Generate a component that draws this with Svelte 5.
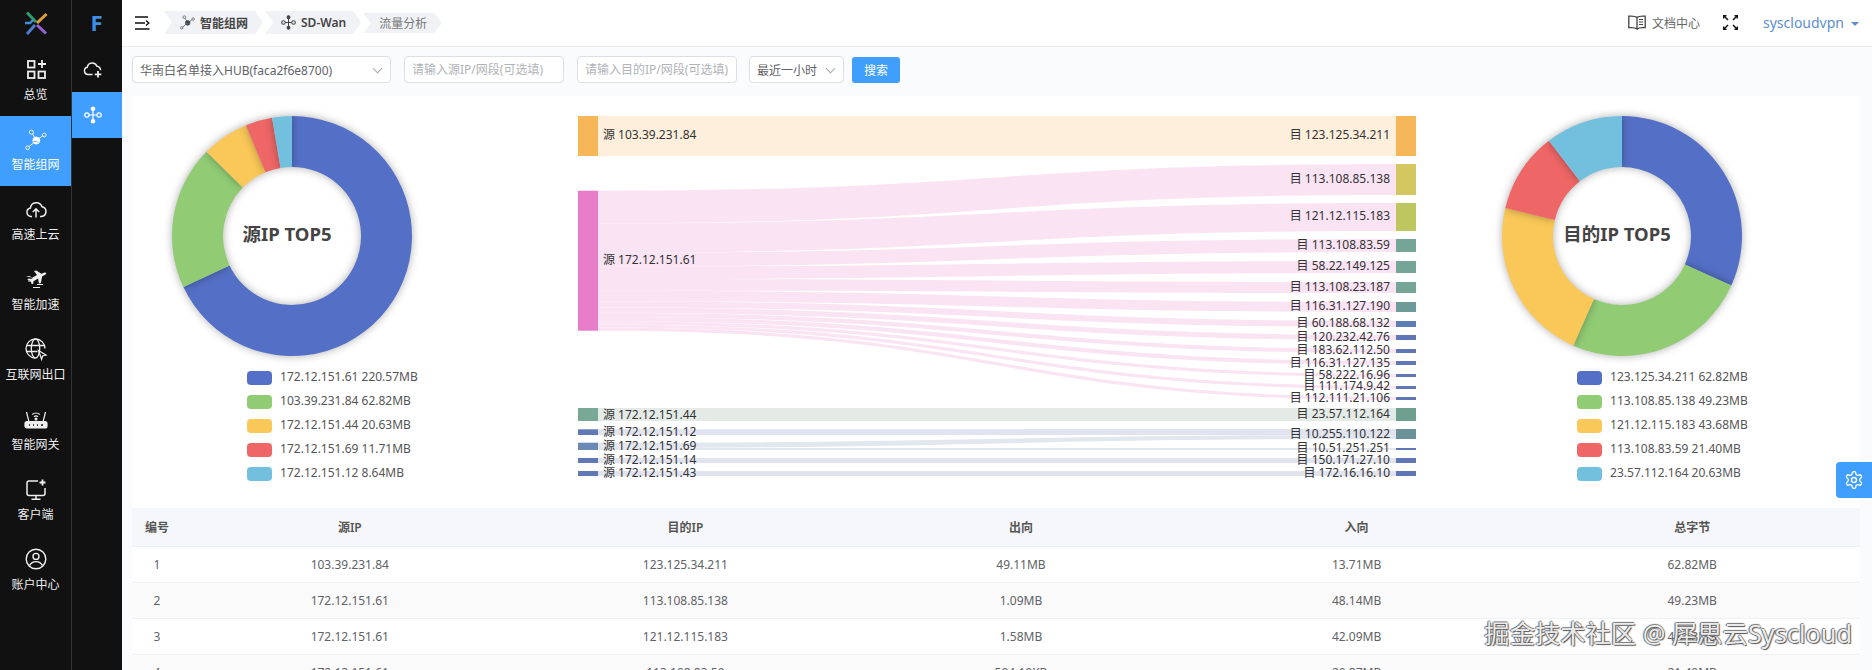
<script>
	const sourceData = [
		{ name: '172.12.151.61', size: '220.57MB', value: 220.57 },
		{ name: '103.39.231.84', size: '62.82MB', value: 62.82 },
		{ name: '172.12.151.44', size: '20.63MB', value: 20.63 },
		{ name: '172.12.151.69', size: '11.71MB', value: 11.71 },
		{ name: '172.12.151.12', size: '8.64MB', value: 8.64 }
	];
	const targetData = [
		{ name: '123.125.34.211', size: '62.82MB', value: 62.82 },
		{ name: '113.108.85.138', size: '49.23MB', value: 49.23 },
		{ name: '121.12.115.183', size: '43.68MB', value: 43.68 },
		{ name: '113.108.83.59', size: '21.40MB', value: 21.4 },
		{ name: '23.57.112.164', size: '20.63MB', value: 20.63 }
	];
	const palette = ['#5470c6', '#91cc75', '#fac858', '#ee6666', '#73c0de'];

	function sector(r0, r1, a0, a1) {
		const cx = 160;
		const cy = 140;
		const p = (r, a) => `${(cx + r * Math.sin(a)).toFixed(2)} ${(cy - r * Math.cos(a)).toFixed(2)}`;
		const large = a1 - a0 > Math.PI ? 1 : 0;
		return `M${p(r1, a0)}A${r1} ${r1} 0 ${large} 1 ${p(r1, a1)}L${p(r0, a1)}A${r0} ${r0} 0 ${large} 0 ${p(r0, a0)}Z`;
	}

	function sectors(data) {
		const total = data.reduce((s, d) => s + d.value, 0);
		let angle = 0;
		return data.map((d, i) => {
			const next = angle + (d.value / total) * Math.PI * 2;
			const path = sector(69, 120, angle, next);
			angle = next;
			return { path, color: palette[i] };
		});
	}

	const leftNodes = [
		{ label: '103.39.231.84', y0: 116, y1: 156, cy: 134, color: '#f5b65a' },
		{ label: '172.12.151.61', y0: 190.7, y1: 330.7, cy: 259, color: '#e87dca' },
		{ label: '172.12.151.44', y0: 408, y1: 421, cy: 414, color: '#7aa896' },
		{ label: '172.12.151.12', y0: 429.3, y1: 435, cy: 431, color: '#6079b4' },
		{ label: '172.12.151.69', y0: 442.7, y1: 450, cy: 445.5, color: '#6a8ab5' },
		{ label: '172.12.151.14', y0: 458, y1: 463, cy: 459.5, color: '#6079b4' },
		{ label: '172.12.151.43', y0: 471, y1: 476, cy: 472.5, color: '#6079b4' }
	];
	const rightNodes = [
		{ label: '123.125.34.211', y0: 116, y1: 156, cy: 134.5, color: '#f5b65a' },
		{ label: '113.108.85.138', y0: 164, y1: 195, cy: 178.5, color: '#d4c661' },
		{ label: '121.12.115.183', y0: 203, y1: 231, cy: 215.5, color: '#bdc65f' },
		{ label: '113.108.83.59', y0: 239, y1: 252, cy: 244.5, color: '#75a596' },
		{ label: '58.22.149.125', y0: 261, y1: 273, cy: 265.5, color: '#75a596' },
		{ label: '113.108.23.187', y0: 282, y1: 293, cy: 286.5, color: '#75a596' },
		{ label: '116.31.127.190', y0: 302, y1: 312, cy: 305.5, color: '#6f9a9a' },
		{ label: '60.188.68.132', y0: 321, y1: 327, cy: 322.5, color: '#5f7db5' },
		{ label: '120.232.42.76', y0: 335, y1: 340, cy: 336, color: '#5f78b5' },
		{ label: '183.62.112.50', y0: 349, y1: 353, cy: 349.5, color: '#5f78b5' },
		{ label: '116.31.127.135', y0: 361, y1: 365, cy: 362.5, color: '#5f78b5' },
		{ label: '58.222.16.96', y0: 374, y1: 377, cy: 374, color: '#5f78b5' },
		{ label: '111.174.9.42', y0: 386, y1: 389, cy: 385.5, color: '#5f78b5' },
		{ label: '112.111.21.106', y0: 397, y1: 400, cy: 397.5, color: '#5f78b5' },
		{ label: '23.57.112.164', y0: 408, y1: 421, cy: 413.5, color: '#6f9f8f' },
		{ label: '10.255.110.122', y0: 429, y1: 439, cy: 433.5, color: '#6b9199' },
		{ label: '10.51.251.251', y0: 448, y1: 450, cy: 447.5, color: '#5f78b5' },
		{ label: '150.171.27.10', y0: 458, y1: 463, cy: 459.5, color: '#5f78b5' },
		{ label: '172.16.16.10', y0: 471, y1: 476, cy: 472.5, color: '#5f78b5' }
	];

	function band(l0, l1, r0, r1) {
		const x0 = 598;
		const x1 = 1396;
		const m = (x0 + x1) / 2;
		return `M${x0} ${l0}C${m} ${l0} ${m} ${r0} ${x1} ${r0}L${x1} ${r1}C${m} ${r1} ${m} ${l1} ${x0} ${l1}Z`;
	}

	// the big source node fans out to targets 1..13
	const pinkTargets = rightNodes.slice(1, 14);
	const pinkTotal = pinkTargets.reduce((s, n) => s + (n.y1 - n.y0), 0);
	let pinkY = 190.7;
	const links = [{ d: band(116, 156, 116, 156), color: '#feefdd' }];
	for (const n of pinkTargets) {
		const h = ((n.y1 - n.y0) / pinkTotal) * 140;
		links.push({ d: band(pinkY, pinkY + h, n.y0, n.y1), color: '#fae4f3' });
		pinkY += h;
	}
	links.push({ d: band(408, 421, 408, 421), color: '#e4ebe7' });
	links.push({ d: band(429.3, 435, 429, 435), color: '#e1e4ee' });
	links.push({ d: band(442.7, 448, 435, 439), color: '#e2e7ef' });
	links.push({ d: band(448, 450, 448, 450), color: '#e2e7ef' });
	links.push({ d: band(458, 463, 458, 463), color: '#e1e4ee' });
	links.push({ d: band(471, 476, 471, 476), color: '#e1e4ee' });

	const rows = [
		['1', '103.39.231.84', '123.125.34.211', '49.11MB', '13.71MB', '62.82MB'],
		['2', '172.12.151.61', '113.108.85.138', '1.09MB', '48.14MB', '49.23MB'],
		['3', '172.12.151.61', '121.12.115.183', '1.58MB', '42.09MB', '43.68MB'],
		['4', '172.12.151.61', '113.108.83.59', '594.19KB', '20.87MB', '21.40MB']
	];
</script>

{#snippet donut(data, title, titleX)}
	<div class="chart">
		<svg class="donut" width="320" height="268" viewBox="0 0 320 268">
			{#each sectors(data) as s}
				<path class="sector" d={s.path} fill={s.color} />
			{/each}
			<text class="donut-title" x={titleX} y="137">{title}</text>
		</svg>
		<ul class="legend">
			{#each data as d, i}
				<li>
					<span class="swatch" style="background: {palette[i]}"></span>
					{d.name} {d.size}
				</li>
			{/each}
		</ul>
	</div>
{/snippet}

{#snippet networkIcon(size)}
	<svg width={size} height={size} viewBox="0 0 16 16" fill="none" stroke="currentColor" stroke-width="1.1">
		<circle cx="2.600" cy="8" r="1.900" />
		<circle cx="13.400" cy="8" r="1.900" />
		<path d="M4.500 8h7M8 3v10" />
		<circle cx="8" cy="2.400" r="1.500" fill="currentColor" />
		<circle cx="8" cy="13.600" r="1.500" fill="currentColor" />
	</svg>
{/snippet}

{#snippet meshIcon(size)}
	<svg width={size} height={size} viewBox="0 0 24 24" fill="none" stroke="currentColor" stroke-width="1">
		<circle cx="7" cy="3.500" r="2.200" />
		<circle cx="21" cy="6.500" r="2" />
		<circle cx="2.800" cy="20.500" r="2" />
		<path d="M8.300 5.400 11 10M19.300 7.600 15 10.500M4.400 19.200 9.500 15" />
		<circle cx="12.300" cy="12.600" r="3.800" fill="currentColor" />
		<path d="M9 13.500c2-.2 4 .3 6 1" stroke="#409eff" stroke-width=".8" />
	</svg>
{/snippet}

<div class="app">
	<aside class="rail">
		<div class="logo">
			<svg width="24" height="24" viewBox="0 0 24 24" fill="none" stroke-width="3">
				<path d="M3 1.500 12 11" stroke="#2f9e68" />
				<path d="M22.500 3 13 12" stroke="#e0a13c" />
				<path d="M1 12h5l3-3" stroke="#3f8fd8" stroke-width="2.400" />
				<path d="M3 23l8-9" stroke="#4a7fd0" />
				<path d="M13 14l9 8.500" stroke="#9a5fd6" />
			</svg>
		</div>
		<a class="nav-item">
			<svg width="24" height="24" viewBox="0 0 24 24" fill="none" stroke="currentColor" stroke-width="1.800">
				<rect x="4" y="4" width="6.500" height="6.500" />
				<rect x="4" y="14.500" width="6.500" height="6.500" />
				<rect x="14.500" y="14.500" width="6.500" height="6.500" />
				<path d="M18 3v8M14 7h8" />
			</svg>
			<span>总览</span>
		</a>
		<a class="nav-item active">
			{@render meshIcon(22)}
			<span>智能组网</span>
		</a>
		<a class="nav-item">
			<svg width="24" height="24" viewBox="0 0 24 24" fill="none" stroke="currentColor" stroke-width="1.500">
				<path d="M8 19.500H7a4.300 4.300 0 0 1-.6-8.500A6 6 0 0 1 18 9.800a4.900 4.900 0 0 1-.6 9.700h-1.400" />
				<path d="M12 20.500v-8.500M8.800 15 12 11.800l3.200 3.200" />
			</svg>
			<span>高速上云</span>
		</a>
		<a class="nav-item">
			<svg width="24" height="24" viewBox="0 0 24 24" fill="currentColor">
				<path d="M2 9.500 5 9l3.500 1.500L13 8 10 4l2.200-.4 5.300 3.200 3-1.300c1.600-.5 2.500 1 1 1.900l-3.400 2.200-1.200 6.400-2 .6-.8-5-4.600 2.600-.3 2.600-1.500.4-1-3.200-3.500-1.600 1.600-.9 2.200.5 2-1.300z" />
				<path d="M9 20.500h7M13 17.500h6M4 14h3" stroke="currentColor" stroke-width="1" fill="none" />
			</svg>
			<span>智能加速</span>
		</a>
		<a class="nav-item">
			<svg width="24" height="24" viewBox="0 0 24 24" fill="none" stroke="currentColor" stroke-width="1.300">
				<path d="M21 11.500A9.500 9.500 0 1 0 11 21" />
				<ellipse cx="11.500" cy="11.500" rx="4.200" ry="9.500" />
				<path d="M2.500 8.500h18M2.500 14.500h11" />
				<path d="M14.500 13.500 22 18l-3.400 1-1 3.200z" />
			</svg>
			<span>互联网出口</span>
		</a>
		<a class="nav-item">
			<svg width="24" height="24" viewBox="0 0 24 24" fill="none" stroke="currentColor" stroke-width="1.200">
				<path d="M5 15 2.500 5M19 15l2.500-10" />
				<path d="M8.200 7.500a5.500 5.500 0 0 1 7.600 0M10 9.800a3 3 0 0 1 4 0" />
				<circle cx="12" cy="12" r=".9" fill="currentColor" />
				<rect x="1" y="14.500" width="22" height="6.500" rx="2" fill="currentColor" />
				<path d="M5 18h1M9 18h1M13 18h1M17 18h2" stroke="#111" stroke-width="1.400" />
			</svg>
			<span>智能网关</span>
		</a>
		<a class="nav-item">
			<svg width="24" height="24" viewBox="0 0 24 24" fill="none" stroke="currentColor" stroke-width="1.500">
				<path d="M14 4H5a2 2 0 0 0-2 2v10.500a2 2 0 0 0 2 2h14a2 2 0 0 0 2-2V11" />
				<path d="M12 18.500V22M7.500 22.300h9" />
				<path d="M18.500 2.500v6M15.500 5.500h6" stroke-width="1.800" />
			</svg>
			<span>客户端</span>
		</a>
		<a class="nav-item">
			<svg width="24" height="24" viewBox="0 0 24 24" fill="none" stroke="currentColor" stroke-width="1.400">
				<circle cx="12" cy="12" r="9.800" />
				<circle cx="12" cy="9.400" r="3" />
				<path d="M5.500 18.600c1.500-3 3.700-4 6.500-4s5 1 6.500 4" />
			</svg>
			<span>账户中心</span>
		</a>
	</aside>

	<aside class="subrail">
		<div class="brand">F</div>
		<a class="sub-item">
			<svg width="20" height="20" viewBox="0 0 20 20" fill="none" stroke="currentColor" stroke-width="1.400">
				<path d="M9.500 15.500H5a3.700 3.700 0 0 1-.7-7.300 5 5 0 0 1 9.600-1 4 4 0 0 1 3.600 4" />
				<path d="M15 12v6.500M11.800 15.300h6.500" stroke-width="1.800" />
			</svg>
		</a>
		<a class="sub-item active">{@render networkIcon(18)}</a>
	</aside>

	<div class="main">
		<header class="topbar">
			<svg class="menu-icon" width="15" height="14" viewBox="0 0 15 14" fill="none" stroke="#111" stroke-width="1.700">
				<path d="M0 1h13M0 7h10M0 13h14.500" />
				<path d="M11 4.500 13.800 7 11 9.500" stroke-width="1.400" />
			</svg>
			<nav class="crumbs">
				<span class="crumb strong">{@render meshIcon(15)}智能组网</span>
				<span class="crumb strong">{@render networkIcon(15)}SD-Wan</span>
				<span class="crumb last">流量分析</span>
			</nav>
			<div class="top-right">
				<span class="docs">
					<svg width="18" height="15" viewBox="0 0 18 15" fill="none" stroke="#444" stroke-width="1.300">
						<path d="M9 2.500C7.500 1 4 1 .8 1.200v11.500c3.200-.2 6.700-.2 8.200 1.300V2.500c1.500-1.500 5-1.500 8.200-1.300v11.500c-3.200-.2-6.700-.2-8.200 1.300" />
						<path d="M11 4.500h4M11 7h4M11 9.500h4" stroke-width="1" />
					</svg>
					文档中心
				</span>
				<svg class="expand" width="15" height="15" viewBox="0 0 15 15" fill="none" stroke="#111" stroke-width="1.500">
					<path d="M1 1l4 4M14 1l-4 4M1 14l4-4M14 14l-4-4" />
					<path d="M.7 3.500V.7h2.800M14.300 3.500V.7h-2.800M.7 11.500v2.800h2.800M14.300 11.500v2.800h-2.800" />
				</svg>
				<span class="user">syscloudvpn<i class="caret"></i></span>
			</div>
		</header>

		<div class="filters">
			<div class="select hub">华南白名单接入HUB(faca2f6e8700)<i class="chevron"></i></div>
			<input class="field" placeholder="请输入源IP/网段(可选填)" />
			<input class="field" placeholder="请输入目的IP/网段(可选填)" />
			<div class="select range">最近一小时<i class="chevron"></i></div>
			<button class="search">搜索</button>
		</div>

		<section class="card">
			<div class="charts">
				{@render donut(sourceData, '源IP TOP5', 155)}
				<svg class="sankey" width="1010" height="412" viewBox="452 96 1010 412">
					{#each links as l}
						<path d={l.d} fill={l.color} />
					{/each}
					{#each leftNodes as n}
						<rect x="578" y={n.y0} width="20" height={n.y1 - n.y0} fill={n.color} />
						<text class="node-label" x="603" y={n.cy}>源 {n.label}</text>
					{/each}
					{#each rightNodes as n}
						<rect x="1396" y={n.y0} width="20" height={n.y1 - n.y0} fill={n.color} />
						<text class="node-label end" x="1390" y={n.cy}>目 {n.label}</text>
					{/each}
				</svg>
				{@render donut(targetData, '目的IP TOP5', 155)}
			</div>

			<table class="traffic">
				<colgroup>
					<col class="index-col" />
				</colgroup>
				<thead>
					<tr>
						<th>编号</th>
						<th>源IP</th>
						<th>目的IP</th>
						<th>出向</th>
						<th>入向</th>
						<th>总字节</th>
					</tr>
				</thead>
				<tbody>
					{#each rows as row}
						<tr>
							{#each row as cell}
								<td>{cell}</td>
							{/each}
						</tr>
					{/each}
				</tbody>
			</table>
		</section>
	</div>

	<button class="settings" aria-label="设置">
		<svg width="20" height="20" viewBox="0 0 24 24" fill="none" stroke="#fff" stroke-width="1.600">
			<path d="M12.220 2h-.44a2 2 0 0 0-2 2v.18a2 2 0 0 1-1 1.730l-.43.25a2 2 0 0 1-2 0l-.15-.08a2 2 0 0 0-2.730.73l-.22.38a2 2 0 0 0 .73 2.730l.15.1a2 2 0 0 1 1 1.720v.51a2 2 0 0 1-1 1.740l-.15.09a2 2 0 0 0-.73 2.730l.22.38a2 2 0 0 0 2.730.73l.15-.08a2 2 0 0 1 2 0l.43.25a2 2 0 0 1 1 1.730V20a2 2 0 0 0 2 2h.44a2 2 0 0 0 2-2v-.18a2 2 0 0 1 1-1.730l.43-.25a2 2 0 0 1 2 0l.15.08a2 2 0 0 0 2.730-.73l.22-.39a2 2 0 0 0-.73-2.730l-.15-.08a2 2 0 0 1-1-1.740v-.5a2 2 0 0 1 1-1.740l.15-.09a2 2 0 0 0 .73-2.730l-.22-.38a2 2 0 0 0-2.730-.73l-.15.08a2 2 0 0 1-2 0l-.43-.25a2 2 0 0 1-1-1.730V4a2 2 0 0 0-2-2z" />
			<circle cx="12" cy="12" r="3" />
		</svg>
	</button>
	<div class="watermark">掘金技术社区 @ 犀思云Syscloud</div>
</div>

<style>
	:global(body) {
		margin: 0;
		background: #fff;
	}

	.app {
		position: relative;
		display: flex;
		width: 1872px;
		height: 670px;
		overflow: hidden;
		font-family: 'Noto Sans', 'Noto Sans CJK SC', sans-serif;
		font-size: 12px;
		color: #606266;
	}

	.rail {
		flex: none;
		width: 71px;
		background: #111;
		border-right: 1px solid #333;
		color: #eee;
	}
	.logo {
		display: flex;
		align-items: center;
		justify-content: center;
		height: 46px;
	}
	.nav-item {
		display: flex;
		flex-direction: column;
		align-items: center;
		justify-content: flex-end;
		height: 70px;
		padding-bottom: 12px;
		box-sizing: border-box;
		gap: 5px;
		line-height: 18px;
		white-space: nowrap;
	}
	.nav-item.active,
	.sub-item.active {
		background: #409eff;
		color: #fff;
	}

	.subrail {
		flex: none;
		width: 50px;
		background: #111;
		color: #eee;
	}
	.brand {
		height: 46px;
		line-height: 44px;
		text-align: center;
		font-size: 22px;
		font-weight: 700;
		color: #3d8fe6;
		padding-right: 1px;
		box-sizing: border-box;
	}
	.sub-item {
		display: flex;
		align-items: center;
		justify-content: center;
		height: 46px;
		padding-right: 8px;
		box-sizing: border-box;
	}

	.main {
		flex: 1;
		min-width: 0;
		display: flex;
		flex-direction: column;
		background: #fafbfc;
	}

	.topbar {
		flex: none;
		display: flex;
		align-items: center;
		height: 47px;
		box-sizing: border-box;
		padding: 0 13px 1px 13px;
		background: #fff;
		border-bottom: 1px solid #e8eaec;
	}
	.menu-icon {
		margin-right: 14px;
	}
	.crumbs {
		display: flex;
		gap: 2px;
	}
	.crumb {
		display: flex;
		align-items: center;
		gap: 5px;
		height: 23px;
		padding: 0 15px 0 16px;
		background: #f0f2f5;
		color: #777;
		clip-path: polygon(0 0, calc(100% - 8px) 0, 100% 50%, calc(100% - 8px) 100%, 0 100%, 8px 50%);
	}
	.crumb.strong {
		color: #444;
		font-weight: 600;
		padding-right: 15px;
	}
	.crumb.last {
		height: 20px;
		margin-top: 2px;
	}
	.top-right {
		display: flex;
		align-items: center;
		margin-left: auto;
	}
	.docs {
		display: flex;
		align-items: center;
		gap: 6px;
		color: #666;
	}
	.expand {
		margin: 0 25px 0 23px;
	}
	.user {
		display: flex;
		align-items: center;
		font-size: 14px;
		color: #5b8fd0;
	}
	.caret {
		width: 0;
		height: 0;
		margin: 2px 0 0 7px;
		border: 4px solid transparent;
		border-top: 4px solid #5b8fd0;
		border-bottom: 0;
	}

	.filters {
		flex: none;
		display: flex;
		align-items: center;
		gap: 13px;
		height: 49px;
		padding: 0 10px 4px;
		box-sizing: border-box;
	}
	.select,
	.field {
		display: flex;
		align-items: center;
		height: 27px;
		box-sizing: border-box;
		padding: 0 7px;
		background: #fff;
		border: 1px solid #dcdfe6;
		border-radius: 4px;
		font: inherit;
		color: #606266;
	}
	.field {
		width: 160px;
		outline: none;
	}
	.field::placeholder {
		color: #b0b3b9;
	}
	.hub {
		width: 259px;
	}
	.range {
		width: 95px;
		margin-left: -1px;
	}
	.chevron {
		width: 6px;
		height: 6px;
		margin: -3px 2px 0 auto;
		border-right: 1px solid #aaa;
		border-bottom: 1px solid #aaa;
		transform: rotate(45deg);
	}
	.search {
		width: 48px;
		height: 26px;
		margin-left: -5px;
		padding: 0;
		border: 0;
		border-radius: 3px;
		background: #409eff;
		color: #fff;
		font: inherit;
	}

	.card {
		flex: 1;
		min-height: 0;
		margin: 0 12px 0 10px;
		background: #fff;
	}
	.charts {
		display: grid;
		grid-template-columns: 320px 1fr 320px;
		height: 412px;
		padding-right: 78px;
	}
	.donut,
	.sankey {
		display: block;
		overflow: visible;
	}
	.sector {
		filter: drop-shadow(0 0 4px rgba(0, 0, 0, 0.32));
	}
	.donut-title {
		font-size: 18.500px;
		font-weight: 700;
		fill: #444;
		text-anchor: middle;
		dominant-baseline: central;
	}
	.legend {
		list-style: none;
		margin: 0;
		padding: 0 0 0 115px;
		color: #555;
	}
	.legend li {
		display: flex;
		align-items: center;
		gap: 5px;
		height: 24px;
		white-space: pre;
	}
	.swatch {
		width: 25px;
		height: 14px;
		margin-top: 3px;
		border-radius: 4px;
	}
	.node-label {
		font-size: 12px;
		fill: #333;
		dominant-baseline: central;
	}
	.node-label.end {
		text-anchor: end;
	}

	.traffic {
		width: 100%;
		table-layout: fixed;
		border-collapse: collapse;
		text-align: center;
	}
	.index-col {
		width: 50px;
	}
	.traffic th {
		height: 38px;
		padding: 0;
		background: #f5f7fa;
		border-bottom: 1px solid #ebeef5;
		color: #555;
		font-weight: 600;
	}
	.traffic td {
		height: 35px;
		padding: 0;
		border-bottom: 1px solid #f0f1f4;
	}
	.traffic tbody tr:nth-child(even) td {
		background: #fafafa;
	}

	.settings {
		position: absolute;
		right: 0;
		top: 462px;
		display: flex;
		align-items: center;
		justify-content: center;
		width: 36px;
		height: 36px;
		padding: 0;
		border: 0;
		border-radius: 4px 0 0 4px;
		background: #409eff;
	}
	.watermark {
		position: absolute;
		right: 20px;
		top: 615px;
		font-size: 25.300px;
		line-height: 36px;
		color: rgba(255, 255, 255, 0.9);
		text-shadow: 1px 1px 1px #555, -1px 0 1px #666, 0 -1px 1px #777;
		white-space: nowrap;
	}
</style>
